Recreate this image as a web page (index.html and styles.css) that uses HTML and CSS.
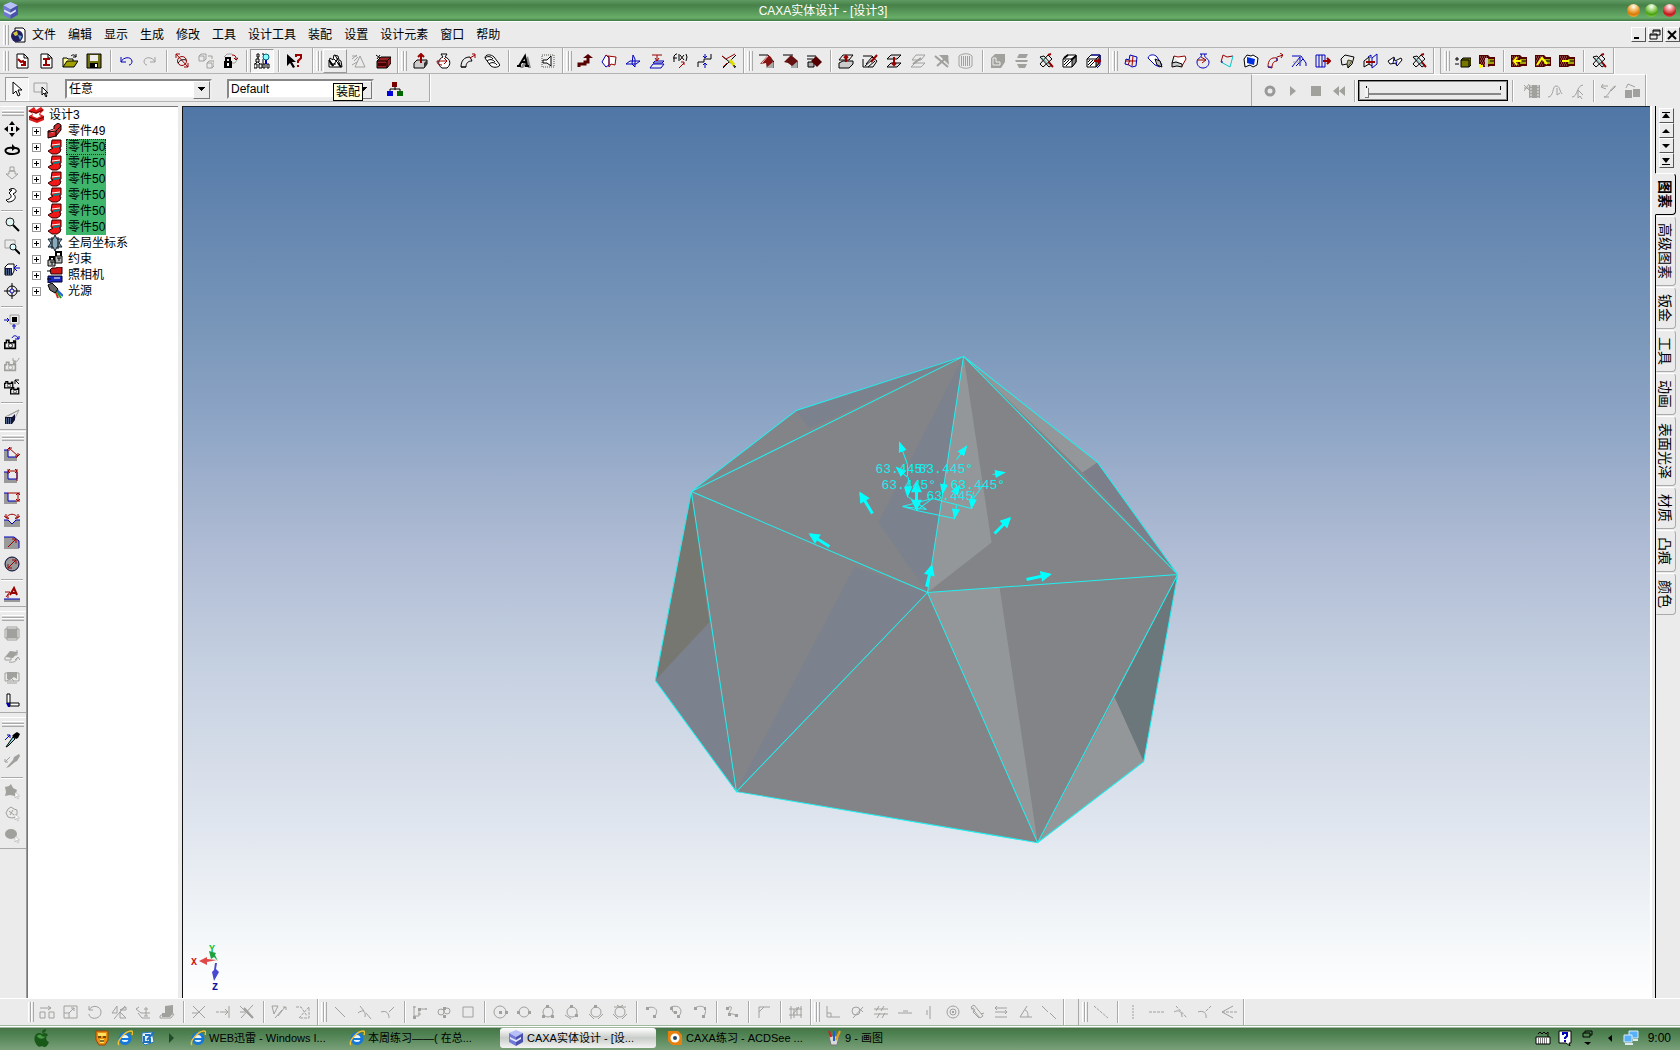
FILE: index.html
```html
<!DOCTYPE html>
<html lang="zh-CN">
<head>
<meta charset="utf-8">
<title>CAXA实体设计 - [设计3]</title>
<link rel="stylesheet" href="styles.css">
</head>
<body>
<svg class="defs" aria-hidden="true">
  <symbol id="cube" viewBox="0 0 16 16"><path fill="#b8c0f8" d="M8 0l7 3-7 4-7-4z"/><path fill="#7078d8" d="M1 3l7 4v9l-7-4z"/><path fill="#4a50b0" d="M15 3L8 7v9l7-4z"/><path fill="#e4e8ff" d="M2 7l6 3 5-3v2l-5 3-6-3z"/></symbol>
  <symbol id="ie" viewBox="0 0 16 16"><circle cx="8" cy="8.500" r="5" fill="#e8f6ff" stroke="#1878d8" stroke-width="3"/><path fill="#1878d8" d="M4 8h10v2H4z"/><path fill="none" stroke="#f4c030" stroke-width="1.500" d="M2 15C-1 12 8 1 14 1c2 0 2 2 1 4"/></symbol>
  <symbol id="part" viewBox="0 0 16 16"><path fill="#f01818" stroke="#300" d="M5 1l9 0 0 7-2 1 2 1-1 3-3 2-5 0-4-3 5-3-2-1z"/><path stroke="#fff" d="M5 6l8-1"/><path stroke="#088" stroke-width="2" d="M7 8l6-1"/></symbol>
  <symbol id="camera" viewBox="0 0 16 16"><path fill="none" stroke="currentColor" stroke-width="2" d="M1 7h2V4h3v3h6V5h2v9H1z"/><circle cx="8" cy="10.500" r="2.500" fill="none" stroke="currentColor"/></symbol>
  <symbol id="solid" viewBox="0 0 16 16"><path fill="#fff" stroke="currentColor" d="M1 6l4-4h9v7l-4 5H1z"/><path fill="#888" stroke="currentColor" d="M10 6l4-4v7l-4 5z"/><path stroke="currentColor" d="M1 6h9M2 12l5-5M4 13l6-6M2 9l2-2"/></symbol>
  <symbol id="tools" viewBox="0 0 16 16"><path fill="none" stroke="#000" d="M2 4l4-1 8 9-3 2zM10 2l4 4-9 8-3-3z"/><path stroke="#900" stroke-width="2" d="M10 9l5 5M10 2l3-1"/><path stroke="#48b0b0" d="M4 5l8 7"/></symbol>
  <symbol id="box3" viewBox="0 0 16 16"><path fill="#500" d="M0 2h9l2 2h5v9h-5l-2 1H0z"/><path stroke="#b88" stroke-dasharray="1 1" d="M1 4h7M2 6h6M1 8h7M2 10h6M1 12h7"/><path fill="#a0a010" d="M9 6h6v5H9z"/><path stroke="#000" d="M11 8h4"/></symbol>
  <symbol id="pick" viewBox="0 0 16 16"><path fill="#fff" stroke="currentColor" d="M4 1v12l3-3 2 5 2-1-2-5h4z"/></symbol>
  <marker id="tip" viewBox="0 0 8 8" refX="7" refY="4" markerWidth="11" markerHeight="11" markerUnits="userSpaceOnUse" orient="auto"><path fill="#0ff" d="M0 1l8 3-8 3z"/></marker>
  <marker id="bigtip" viewBox="0 0 10 10" refX="8" refY="5" markerWidth="12" markerHeight="11" markerUnits="userSpaceOnUse" orient="auto"><path fill="#0ff" d="M0 0l10 5-10 5z"/></marker>
</svg>

<div class="app">
<header class="titlebar">
  <svg class="logo"><use href="#cube"/></svg>
  <h1>CAXA实体设计 - [设计3]</h1>
  <div class="lights"><button class="light amber" aria-label="最小化"></button><button class="light green" aria-label="还原"></button><button class="light red" aria-label="关闭"></button></div>
</header>

<nav class="menubar">
  <span class="grip"></span>
  <svg class="ico" viewBox="0 0 16 16"><path class="k" fill="#fff" d="M5 1h8l2 2v12H5z"/><circle cx="7" cy="9" r="6" fill="#202060"/><path fill="#d8c840" d="M3 6l4-2 1 4-3 1z"/><path fill="#68a8d8" d="M8 8l4 1-2 4z"/></svg>
  <button>文件</button><button>编辑</button><button>显示</button><button>生成</button><button>修改</button><button>工具</button><button>设计工具</button><button>装配</button><button>设置</button><button>设计元素</button><button>窗口</button><button>帮助</button>
  <div class="docwin"><button aria-label="最小化文档"><svg viewBox="0 0 12 12"><path class="kf" d="M2 8h5v2H2z"/></svg></button><button aria-label="还原文档"><svg viewBox="0 0 12 12"><path class="k" d="M4 4V1h7v5H8M4 2h7M1 5h7v5H1zM1 6h7"/></svg></button><button aria-label="关闭文档"><svg viewBox="0 0 12 12"><path class="k w2" d="M2 2l8 8M10 2l-8 8"/></svg></button></div>
</nav>

<div class="toolbars">
<div class="bar">
  <div class="group first">
    <span class="grip"></span>
    <button aria-label="新建设计"><svg viewBox="0 0 16 16"><path class="k" fill="#fff" d="M3 1h7l4 4v10H3z"/><path class="k" d="M10 1v4h4"/><path class="r w2" d="M4 6l3 3 2-1 2 4M11 8v4H7"/></svg></button>
    <button aria-label="新建图纸"><svg viewBox="0 0 16 16"><path class="k" fill="#fff" d="M3 1h7l4 4v10H3z"/><path class="k" d="M10 1v4h4"/><path class="r w2" d="M5 6h7M5 12h7M8 6v6"/></svg></button>
    <button aria-label="打开"><svg viewBox="0 0 16 16"><path class="k" fill="#ff9" d="M1 14V5h4l1 1h5v3"/><path class="k" fill="#a0a000" d="M1 14l4-6h11l-4 6z"/><path class="k" d="M9 3c2-2 4-1 5 1M14 1v3h-3"/></svg></button>
    <button aria-label="保存"><svg viewBox="0 0 16 16"><path class="k" fill="#707010" d="M1 1h14v14H1z"/><path fill="#eee" d="M4 2h8v6H4z"/><path class="kf" d="M4 10h8v5H4z"/><path fill="#fff" d="M9 11h2v3H9z"/></svg></button>
    <i class="sep"></i>
    <button aria-label="撤销"><svg viewBox="0 0 16 16"><path class="b" d="M3 4v5h5M3 9c2-5 10-6 11-1 0 2-1 4-3 4"/></svg></button>
    <button aria-label="重做" disabled><svg viewBox="0 0 16 16"><path class="g" d="M13 4v5H8M13 9C11 4 3 3 2 8c0 2 1 4 3 4"/></svg></button>
    <i class="sep"></i>
    <button aria-label="三维球"><svg viewBox="0 0 16 16"><circle cx="8" cy="8" r="4.500" class="r"/><path class="r" d="M2 1l12 13M2 5V1h4M10 14h4v-4"/><path class="k" d="M4 10c2-3 5-4 8-3"/></svg></button>
    <button aria-label="链接" disabled><svg viewBox="0 0 16 16"><path class="g" d="M1 3l2-2h5v5L6 8H1zM1 3h5v5M9 10l2-2h5v5l-2 2H9zM9 10h5v5M10 3h4v3"/></svg></button>
    <button aria-label="锁定"><svg viewBox="0 0 16 16"><path class="g" d="M2 4l3-3h5M8 10h5l2-3V4"/><path class="kf" d="M2 8h8v7H2z"/><path class="k w2" d="M4 8V5h4v3"/><path fill="#fff" d="M5 10h2v3H5z"/><path class="r" d="M10 2c3 0 4 1 4 4M12 5l2 2 2-2"/></svg></button>
    <i class="sep"></i>
    <button class="on" aria-label="设计树"><svg viewBox="0 0 16 16"><path class="k" d="M3 1h2v3H3zM2 6h3v3H2zM0 11h3v4H0zM5 11h3v4H5zM4 4v2M3 9l-2 2M4 9l2 2M8 1h2v3M9 6v5M9 11h2v4H9zM13 11h2v4h-2z"/><circle cx="12" cy="4" r="3" fill="#8ff" stroke="#006080"/><path class="b w2" d="M12 7v4"/></svg></button>
    <i class="sep"></i>
    <button aria-label="帮助"><svg viewBox="0 0 16 16"><path class="kf" d="M1 1v12l3-3 3 5 2-1-3-5h4z"/><path class="r w2" d="M10 4V2h5v3l-3 3v2M12 12v2"/></svg></button>
  </div>
  <div class="group">
    <span class="grip"></span>
    <button class="hov" aria-label="装配"><svg viewBox="0 0 16 16"><path class="k" fill="#fff" d="M2 9l1-4 3 2 1-5 4 1 1 4 2 1 1 6H2zM7 6l4 4M11 5l-5 8M3 11h6M8 2l5 9"/><path class="k w2" d="M2 7l4 6M11 10l3 4"/></svg></button>
    <button aria-label="解除装配" disabled><svg viewBox="0 0 16 16"><path class="g" d="M1 3h5M1 6l5-4M3 8l4-4M4 14l5-11 5 11zM1 12l5-3"/></svg></button>
    <button aria-label="零件库"><svg viewBox="0 0 16 16"><path class="k" fill="#922" d="M2 8l4-4h10v6l-4 5H2z"/><path class="k" d="M2 8h10v7M12 8l4-4M1 2l4 3M2 6l3-4"/><path fill="#400" d="M3 10h8v3H3z"/></svg></button>
  </div>
  <div class="group">
    <span class="grip"></span>
    <button aria-label="拉伸"><svg viewBox="0 0 16 16"><path class="k" fill="#ccc" d="M2 10l3-3h10v4l-3 4H2z"/><path fill="#333" d="M12 10l3-3v4l-3 4z"/><path class="r w2" d="M9 10V2M6 4l3-3 3 3"/></svg></button>
    <button aria-label="旋转"><svg viewBox="0 0 16 16"><path class="k" fill="#fff" d="M5 1h6L9 4c6 2 6 8 2 11H6c-5-3-4-9 1-11z"/><path class="r" d="M1 8h10M8 5l3 3-3 3M1 8c0 3 2 4 5 4"/></svg></button>
    <button aria-label="扫描"><svg viewBox="0 0 16 16"><path class="k" d="M1 14C1 8 4 4 10 4l2 4c-4 0-6 2-6 6zM1 14h5"/><path class="r" d="M10 5l5-3M12 1h3v4"/></svg></button>
    <button aria-label="放样"><svg viewBox="0 0 16 16"><path class="k" fill="#fff" d="M1 5c0-4 6-4 9-1l6 8c-2 3-8 3-10 0zM1 5c2-2 6-2 8 1M3 8c2-2 6-2 8 1M5 11c2-2 6-2 8 1"/></svg></button>
    <i class="sep"></i>
    <button aria-label="文字"><svg viewBox="0 0 16 16"><path fill="#888" d="M4 15L12 3l3 12h-3l-1-4-4 4z"/><path class="k w2" d="M1 13h4M9 13h4M3 13l6-10 2 10M6 9h5"/></svg></button>
    <button aria-label="边界"><svg viewBox="0 0 16 16"><path class="g w2" stroke-dasharray="1 1" d="M2 2h12v12H2z"/><path class="k" fill="#fff" d="M3 7h4l4-4v10l-4-3H3z"/></svg></button>
  </div>
  <div class="group">
    <span class="grip"></span>
    <button aria-label="折弯"><svg viewBox="0 0 16 16"><path stroke="#500" stroke-width="3" fill="none" d="M2 14v-3h6V9h3V5"/><path fill="#500" d="M6 5h10l-5-4z"/></svg></button>
    <button aria-label="曲面片"><svg viewBox="0 0 16 16"><path class="r" fill="#fff" d="M7 3l8 1-1 8-4-1-2 3z"/><path class="b" fill="#fff" d="M1 9l4-7 3 3v7l-3 2z"/><path class="r" d="M5 2l3 2v8"/></svg></button>
    <button aria-label="基准面"><svg viewBox="0 0 16 16"><path class="b" d="M1 11l4-3h10l-4 3zM8 2l2 4v8L7 11z"/></svg></button>
    <button aria-label="平行面"><svg viewBox="0 0 16 16"><path class="b" d="M1 15l3-4h11l-3 4zM4 10l2-2h9l-2 2z"/><path class="r" d="M3 2h10M8 2v6M6 5l2 3 2-3"/></svg></button>
    <button aria-label="公式曲线"><svg viewBox="0 0 16 16"><path class="k" d="M1 9V3l2-2h1M0 5h4M6 1v7M7 2l4 5M11 2L7 7M13 1l1 3-1 4"/><path class="r" d="M6 15l5-5M8 9h3v3"/></svg></button>
    <button aria-label="投影曲线"><svg viewBox="0 0 16 16"><path class="k" d="M1 14V9h6V6h7V1"/><path class="b" d="M8 1v4M8 10v5M6 3l2 2 2-2M6 12l2-2 2 2"/></svg></button>
    <button aria-label="删除曲线"><svg viewBox="0 0 16 16"><path class="k" d="M1 3l14 11M15 2L2 15M9 7l5 8"/><path class="r" d="M1 3l4 3 9-5"/><path stroke="#dd0" stroke-width="3" d="M9 7l4 5"/><path class="r" d="M2 14l4-4"/></svg></button>
  </div>
  <div class="group">
    <span class="grip"></span>
    <button aria-label="圆角过渡"><svg viewBox="0 0 16 16"><path class="k" d="M1 2h9l6 7v6"/><path fill="#aaa" d="M8 9h7v6H8z"/><path fill="#811" d="M2 11l8-9 3 2 2 5-6 5-1-4z"/><path stroke="#ecc" d="M4 10l6-7"/></svg></button>
    <button aria-label="倒角"><svg viewBox="0 0 16 16"><path class="k" d="M1 2h10M15 8v7"/><path fill="#aaa" d="M9 9h6v6H9z"/><path fill="#611" d="M2 9l7-7 7 6-6 5-4-3z"/></svg></button>
    <button aria-label="面拔模"><svg viewBox="0 0 16 16"><path class="k" d="M1 3h9M1 6h6"/><path class="k" fill="#aaa" d="M2 9h6v5H2z"/><path fill="#500" d="M5 8l5-5 6 6-5 5z"/></svg></button>
    <i class="sep"></i>
    <button aria-label="抽壳"><svg viewBox="0 0 16 16"><path class="k" fill="#ccc" d="M1 10l4-2h10v3l-4 4H1z"/><path class="k" d="M1 7l4-5h10l-4 5z"/><path class="r w2" d="M8 9V3M6 5l2-2 2 2"/></svg></button>
    <button aria-label="拔模"><svg viewBox="0 0 16 16"><path class="k" d="M1 3h9l2 2M1 6v8h10l4-6-5-4-6 7M3 13l8-7M6 14l7-6"/><path class="r w2" d="M9 9l6-7"/></svg></button>
    <button aria-label="表面移动"><svg viewBox="0 0 16 16"><path class="k" fill="#ddd" d="M1 14l4-4h10l-4 4zM1 6l4-4h10l-4 4z"/><path class="r w2" d="M8 4v8M6 10l2 2 2-2"/></svg></button>
    <button aria-label="表面匹配" disabled><svg viewBox="0 0 16 16"><path class="g" d="M1 14l4-4h10l-4 4zM2 7l4-5h9l-4 5z"/><path class="g w2" d="M3 11l8-6"/></svg></button>
    <button aria-label="表面删除" disabled><svg viewBox="0 0 16 16"><path class="g w2" d="M1 3l13 11M3 13L14 3"/><path class="gf" d="M5 2h9l1 10-4-4z"/></svg></button>
    <button aria-label="表面偏移" disabled><svg viewBox="0 0 16 16"><path class="g" d="M1 3c4-3 10-3 13 0v10c-3 3-9 3-13 0z"/><path class="g w2" stroke-dasharray="1 1" d="M3 4h10M3 6h10M3 8h10M3 10h10M3 12h10"/></svg></button>
    <i class="sep"></i>
    <button aria-label="布尔" disabled><svg viewBox="0 0 16 16"><path class="gf" d="M1 5l4-4h10v8l-4 6H1z"/><path fill="none" stroke="#eee" d="M3 5h3v4h4v3H3z"/></svg></button>
    <button aria-label="截面" disabled><svg viewBox="0 0 16 16"><path class="gf" d="M5 1h9l-2 4H3zM1 7h13l-1 2H2zM3 11h10l-2 4H5z"/></svg></button>
    <button aria-label="分割"><svg viewBox="0 0 16 16"><use href="#tools"/></svg></button>
    <button aria-label="实体"><svg viewBox="0 0 16 16"><use href="#solid"/><path class="k w2" d="M2 5l4-3M9 7l5-4"/></svg></button>
    <button aria-label="实体展开"><svg viewBox="0 0 16 16"><use href="#solid"/><path class="b" d="M5 2h9v10l-3 3"/><path class="r w2" d="M8 8h6M12 6l2 2-2 2"/></svg></button>
  </div>
  <div class="group">
    <span class="grip"></span>
    <button aria-label="网格面"><svg viewBox="0 0 16 16"><path class="b" d="M2 11l1-5 3 1 1-5 7 2-1 9-4 1-3-2z"/><path class="r" d="M2 8h11M7 7l-2 5M10 3l-1 10"/></svg></button>
    <button aria-label="放样面"><svg viewBox="0 0 16 16"><path class="b" fill="#fff" d="M1 5c1-4 7-4 9-1l5 8-2 2-5-2z"/><path class="k" fill="#bbb" d="M8 6l5 2 2 6-5-2z"/></svg></button>
    <button aria-label="直纹面"><svg viewBox="0 0 16 16"><path class="r" fill="#fff" d="M3 3l4 1 7-1 1 3-4 7"/><path class="k" fill="#ccc" d="M1 10l4-1 6 2v3l-5-1-5 1zM3 3l-2 7"/></svg></button>
    <button aria-label="旋转面"><svg viewBox="0 0 16 16"><path class="b" d="M5 1h7M6 1c2 4-4 3-4 8 0 4 3 6 6 6s6-2 6-6c0-4-6-4-4-8"/><path class="r" d="M2 7h9M6 4l5 3-4 3"/></svg></button>
    <button aria-label="导动面"><svg viewBox="0 0 16 16"><path class="r" d="M2 9l2-7 4 2 6-1"/><path stroke="#0cc" fill="none" d="M2 9l9 5 3-11"/><path class="b" d="M2 9h2"/></svg></button>
    <button aria-label="填充面"><svg viewBox="0 0 16 16"><path class="k" fill="#fff" d="M1 6l3-4 4 1 2-1 5 3-1 7-4 2-3-2-5 2z"/><path fill="#0030e0" d="M4 4l8 2-1 6-7-2z"/></svg></button>
    <button aria-label="扫掠面"><svg viewBox="0 0 16 16"><path class="r" d="M1 14C1 7 4 4 10 5v3c-3 0-5 2-5 7zM10 4l6-2M13 0l3 2-2 3"/><path class="b" d="M1 14h4M10 5v3"/></svg></button>
    <button aria-label="偏移面"><svg viewBox="0 0 16 16"><path class="b" d="M1 3h9l5 7v3M1 14l8-10M5 13l7-7M9 4v9"/><path class="g" d="M2 9h9"/></svg></button>
    <button aria-label="延伸面"><svg viewBox="0 0 16 16"><path class="b" d="M1 2h9v12H1zM4 2v12M7 2v12"/><path class="r w2" d="M8 8h7M12 5l3 3-3 3"/></svg></button>
    <button aria-label="裁剪面"><svg viewBox="0 0 16 16"><path class="k" d="M2 6l4-4 9 2-2 7-4 4-1-4-5 1z"/><path fill="#aaa" stroke="#440" d="M8 11l1-4 4 1-4 6z"/></svg></button>
    <button aria-label="合并面"><svg viewBox="0 0 16 16"><path class="b" d="M9 5l5-4v10l-5 4zM5 4l3-2v3"/><path class="k" d="M1 14V8l5-4v7zM6 11l3 2"/><path class="r w2" d="M3 9h9"/></svg></button>
    <button aria-label="还原面"><svg viewBox="0 0 16 16"><path class="k" fill="#fff" d="M1 8l6-4 1 4 6-3 1 2-5 6-1-3-6 1z"/><path class="b" d="M7 5l-1 5M10 8l-1 4"/></svg></button>
    <button aria-label="曲面工具"><svg viewBox="0 0 16 16"><use href="#tools"/></svg></button>
  </div>
  <div class="group last">
    <span class="grip"></span>
    <button aria-label="增减料"><svg viewBox="0 0 16 16"><path class="k" d="M0 6h4M2 4v4M0 11h4"/><path class="k" fill="#770" d="M6 7l2-2h8v7l-2 2H6z"/><path class="k" d="M6 7h8v7"/></svg></button>
    <button aria-label="添加零件"><svg viewBox="0 0 16 16"><use href="#box3"/><path fill="#ccc" d="M6 5h3v9H6z"/><path stroke="#ff0" stroke-width="2" d="M1 11v4M0 13h4"/></svg></button>
    <i class="sep"></i>
    <button aria-label="左移"><svg viewBox="0 0 16 16"><use href="#box3"/><path stroke="#ff0" stroke-width="2" fill="none" d="M3 8h7M6 4L3 8l3 4"/></svg></button>
    <button aria-label="转折"><svg viewBox="0 0 16 16"><use href="#box3"/><path stroke="#ff0" stroke-width="2" fill="none" d="M2 12l5-7 5 6"/></svg></button>
    <button aria-label="延长"><svg viewBox="0 0 16 16"><use href="#box3"/><path stroke="#ff0" stroke-width="2" d="M3 8h7"/></svg></button>
    <i class="sep"></i>
    <button aria-label="工具选项"><svg viewBox="0 0 16 16"><use href="#tools"/></svg></button>
  </div>
</div>

<div class="bar second">
  <div class="group style">
    <button class="on" aria-label="选择"><svg viewBox="0 0 16 16" class="ink"><use href="#pick"/></svg></button>
    <button aria-label="框选"><svg viewBox="0 0 16 16"><path class="g" d="M1 2h13v9H1z"/><path class="k" fill="#fff" d="M9 6v8l2-2 2 4 1-1-2-3h3z"/></svg></button>
    <label class="combo"><select aria-label="选择过滤"><option>任意</option></select></label>
    <label class="combo"><select aria-label="样式"><option>Default</option></select></label>
    <span class="tooltip" role="tooltip">装配</span>
    <button class="tree-btn" aria-label="结构"><svg viewBox="0 0 16 16"><path class="k" d="M8 5v4M3 11V8h10v3"/><path fill="#700" d="M5 1h5v5H5z"/><path fill="#00d" d="M0 10h6v5H0z"/><path fill="#060" d="M10 10h6v5h-6z"/></svg></button>
  </div>
  <div class="group anim">
    <button aria-label="录制" disabled><svg viewBox="0 0 16 16"><circle cx="8" cy="8" r="4" fill="none" stroke="#999" stroke-width="3"/></svg></button>
    <button aria-label="播放" disabled><svg viewBox="0 0 16 16"><path class="gf" d="M5 3l6 5-6 5z"/></svg></button>
    <button aria-label="停止" disabled><svg viewBox="0 0 16 16"><path class="gf" d="M3 3h10v10H3z"/></svg></button>
    <button aria-label="倒回" disabled><svg viewBox="0 0 16 16"><path class="gf" d="M8 3v10L2 8zM14 3v10L8 8z"/></svg></button>
    <i class="sep"></i>
    <label class="slider"><input type="range" aria-label="时间" min="0" max="100" value="0"></label>
    <i class="sep"></i>
    <button aria-label="影片" disabled><svg viewBox="0 0 16 16"><path class="gf" d="M5 2h11v13H5z"/><path class="g" d="M0 2l5 5M5 1L0 8M0 5h5"/><path stroke="#eee" stroke-dasharray="2 1" d="M7 2v13M14 2v13"/></svg></button>
    <button aria-label="路径" disabled><svg viewBox="0 0 16 16"><path class="g" d="M1 14c6 0 4-11 8-11s3 4 6 8M10 5v7l3-2"/></svg></button>
    <button aria-label="路径点" disabled><svg viewBox="0 0 16 16"><path class="g" d="M2 14c6 0 4-11 11-12M8 7v8l2-2 2 3M8 7l5 5"/></svg></button>
    <i class="sep"></i>
    <button aria-label="关键帧" disabled><svg viewBox="0 0 16 16"><path class="g" d="M1 3h6M2 1L0 4l5 2M3 14c5 0 6-10 12-11M10 8l4-4M3 14h5"/></svg></button>
    <button aria-label="序列" disabled><svg viewBox="0 0 16 16"><path class="gf" d="M1 7h7v8H1zM9 6h7v8H9z"/><path class="g" d="M2 5l2-4 7 3"/></svg></button>
  </div>
</div>
</div>

<main class="work">
  <aside class="side">
    <div class="vgroup">
      <span class="hgrip"></span>
      <button aria-label="平移"><svg viewBox="0 0 16 16"><path class="kf" d="M8 0l3 4H5zM8 16l3-4H5zM0 8l4-3v6zM16 8l-4-3v6zM7 6h2v4H7z"/></svg></button>
      <button aria-label="旋转视图"><svg viewBox="0 0 16 16"><path class="k w2" d="M9 5C1 4 0 8 3 10c4 2 12 1 12-2 0-2-2-3-4-3"/><path class="kf" d="M8 1v7l4-3z"/></svg></button>
      <button aria-label="前后移动" disabled><svg viewBox="0 0 16 16"><path class="g" d="M6 2h4v4H6zM5 6v3H2l6 5 6-5h-3V6z"/></svg></button>
      <button aria-label="任意视角"><svg viewBox="0 0 16 16"><path class="k" fill="#fff" d="M5 3c3-3 8-1 7 2l-3 2c5 3 1 8-5 8l-2-2c5-1 7-4 3-7l3-3z"/></svg></button>
      <i class="hsep"></i>
      <button aria-label="缩放"><svg viewBox="0 0 16 16"><circle cx="6" cy="5" r="4" fill="#e0f4f4" stroke="#222"/><path class="k w2" d="M9 8l6 6"/></svg></button>
      <button aria-label="窗口缩放"><svg viewBox="0 0 16 16"><path class="g" d="M1 1h10v8H1z"/><circle cx="9" cy="8" r="3" fill="#dff" stroke="#222"/><path class="k w2" d="M11 10l5 5"/></svg></button>
      <button aria-label="正视"><svg viewBox="0 0 16 16"><path class="k" fill="#fff" d="M1 6l3-3h6v7l-2 4H1z"/><path fill="#114" d="M1 7h7v7H1z"/><path stroke="#8ac" stroke-dasharray="1 1" d="M2 9h5M2 11h5M2 13h5"/><path class="b" d="M11 7h5M13 4l-3 3 3 3"/></svg></button>
      <button aria-label="目标视图"><svg viewBox="0 0 16 16"><circle cx="8" cy="8" r="5" class="k"/><circle cx="8" cy="8" r="2" class="b"/><path class="k" d="M8 0v6M8 10v6M0 8h6M10 8h6"/></svg></button>
      <i class="hsep"></i>
      <button aria-label="视向"><svg viewBox="0 0 16 16"><path class="g" d="M6 2h9v9H6z"/><path class="kf" d="M8 4h5v5H8z"/><path class="b" d="M0 7h5M3 5l2 2-2 2M10 16v-5M8 13h4"/></svg></button>
      <button aria-label="存储视向"><svg viewBox="0 0 16 16" class="ink"><use href="#camera" y="2" width="13" height="13"/><path class="b" d="M8 3c2-4 6-2 6 1M11 4h4V1"/></svg></button>
      <button aria-label="恢复视向" disabled><svg viewBox="0 0 16 16" class="dim"><use href="#camera" y="2" width="13" height="13"/><path class="g" d="M15 1c-1 4-4 4-6 3M9 1v3h3"/></svg></button>
      <button aria-label="交换视向"><svg viewBox="0 0 16 16" class="ink"><use href="#camera" width="10" height="10"/><use href="#camera" x="6" y="6" width="10" height="10"/><path class="k" d="M11 1h4M11 1l4 4M11 1v4"/></svg></button>
      <i class="hsep"></i>
      <button aria-label="透视"><svg viewBox="0 0 16 16"><path class="g" d="M1 8L15 1M10 11l5-10M4 7l11-6"/><path fill="#113" d="M1 8h7l3-3v6l-3 4H1z"/><path stroke="#9bd" stroke-dasharray="1 1" d="M2 10h5M2 12h5M2 14h5"/></svg></button>
    </div>
    <div class="vgroup">
      <span class="hgrip"></span>
      <button aria-label="线性标注"><svg viewBox="0 0 16 16"><path fill="#999" d="M0 4h4v7h9v4H0z"/><path class="b" d="M0 4h4v7h9"/><path class="r" d="M5 2l9 8M5 5V2h3M11 10h3V7M3 4l3-3M12 12l4-4"/></svg></button>
      <button aria-label="水平标注"><svg viewBox="0 0 16 16"><path fill="#999" d="M0 4h4v7h9v4H0z"/><path class="b" d="M0 4h4v7h9V4"/><path class="r" d="M4 1v5M13 1v12M4 3h9M6 1L4 3l2 2M11 1l2 2-2 2"/></svg></button>
      <button aria-label="垂直标注"><svg viewBox="0 0 16 16"><path fill="#999" d="M0 3h4v8h9v3H0z"/><path class="b" d="M0 3h4v8h8"/><path class="r" d="M4 3h12M12 11h4M14 3v8M12 5l2-2 2 2M12 9l2 2 2-2"/></svg></button>
      <button aria-label="角度标注"><svg viewBox="0 0 16 16"><path fill="#999" d="M0 8h4l4 4 4-4h4v7H0z"/><path class="b" d="M0 8h4l4 4 4-4h4"/><path class="r" d="M2 6c3-5 9-5 12 0M0 4l5 3M16 4l-5 3M2 2v4h3M14 2v4h-3"/></svg></button>
      <button aria-label="半径标注"><svg viewBox="0 0 16 16"><path fill="#999" d="M0 3h10l5 4v8H0z"/><path class="b" d="M0 3h10l5 4v7"/><path class="r" d="M4 13l8-8M8 5h4v4"/></svg></button>
      <button aria-label="直径标注"><svg viewBox="0 0 16 16"><circle cx="8" cy="8" r="7" fill="#999" stroke="#003"/><path class="r" d="M4 12l8-8M8 4h4v4M4 8v4h4"/></svg></button>
      <i class="hsep"></i>
      <button aria-label="文字注释"><svg viewBox="0 0 16 16"><path fill="#999" d="M0 13h16v3H0z"/><path class="b" d="M0 13h16"/><path class="r" d="M1 6h5L2 11M4 8v4"/><path class="r w2" d="M6 9l4-7 3 7M8 7h4"/></svg></button>
    </div>
    <div class="vgroup">
      <span class="hgrip"></span>
      <button aria-label="钣金展开" disabled><svg viewBox="0 0 16 16"><path class="gf" d="M3 3h10v9H3z"/><path class="g" d="M1 3h14v9H1zM3 1h10v13H3z"/></svg></button>
      <button aria-label="钣金还原" disabled><svg viewBox="0 0 16 16"><path class="gf" d="M1 9l5-6 8 1-5 6z"/><path class="g" d="M1 9v3h6V7h6V2M5 14c5 1 8-1 8-4M11 12l3-3 2 3"/></svg></button>
      <button aria-label="闭合角" disabled><svg viewBox="0 0 16 16"><path class="gf" d="M3 2h10v7l-3-2-4 3-3-1z"/><path class="g" d="M1 3h14v8H1zM3 11l4-3 3 3M3 13h10"/></svg></button>
      <button aria-label="折弯板"><svg viewBox="0 0 16 16"><path class="k" fill="#fff" d="M3 2h3v9H3zM6 11h9v3H6z"/><path fill="#00a" d="M2 11h4v4H4z"/></svg></button>
    </div>
    <div class="vgroup">
      <span class="hgrip"></span>
      <button aria-label="提取效果"><svg viewBox="0 0 16 16"><path class="kf" d="M10 2l3-2 3 2-2 4-2 1-4-3z"/><path fill="#8dd" stroke="#000" d="M9 5l2 2-7 7-2 1z"/><path class="b" d="M1 8l5-5M3 3h3v3"/></svg></button>
      <button aria-label="应用效果" disabled><svg viewBox="0 0 16 16"><path class="gf" d="M10 3l5-3 1 2-3 5-2 1-6 5-3 1 7-8z"/><path class="g" d="M1 8l5-5M1 5v3h3"/></svg></button>
      <i class="hsep"></i>
      <button aria-label="智能渲染" disabled><svg viewBox="0 0 16 16" class="dim"><path class="gf" d="M1 3l4-1 2-2 2 4 4 2-2 6-5-1-5 1 1-4z"/><use href="#pick" x="9" y="7" width="8" height="9"/></svg></button>
      <button aria-label="凸痕" disabled><svg viewBox="0 0 16 16" class="dim"><path class="g" d="M4 3l3-2 3 2 3 1v4l-1 3-4 1-4-1-2-4zM5 5l5 4M9 4L6 9"/><use href="#pick" x="9" y="7" width="8" height="9"/></svg></button>
      <button aria-label="贴图" disabled><svg viewBox="0 0 16 16" class="dim"><ellipse class="gf" cx="7" cy="6" rx="6" ry="5"/><use href="#pick" x="9" y="7" width="8" height="9"/></svg></button>
    </div>
  </aside>

  <section class="tree" aria-label="设计树">
    <ul>
      <li class="root"><svg class="ico" viewBox="0 0 16 16"><path fill="#e01818" d="M0 4l6-4 2 3 5-3 3 3-4 4 4 2v4l-7 3-8-3v-4l4-2z"/><path fill="#fff" d="M4 5l4 2 4-2-1 3 2 1-4 2-5-2 1-1z"/><path stroke="#600" fill="none" d="M1 4l7 2 7-3M1 10l8 3 7-3"/></svg><span>设计3</span></li>
      <li><i class="plus"></i><svg class="ico" viewBox="0 0 16 16"><path class="k" fill="#d02828" d="M1 8l6-2V3l4-3 3 2v5l-5 6-8 2z"/><path fill="#f88" d="M2 8l5-2 3 2-5 2z"/><path class="k" d="M1 9l8-1 5-5M9 8v6"/></svg><span>零件49</span></li>
      <li><i class="plus"></i><svg class="ico"><use href="#part"/></svg><span class="sel focus">零件50</span></li>
      <li><i class="plus"></i><svg class="ico"><use href="#part"/></svg><span class="sel">零件50</span></li>
      <li><i class="plus"></i><svg class="ico"><use href="#part"/></svg><span class="sel">零件50</span></li>
      <li><i class="plus"></i><svg class="ico"><use href="#part"/></svg><span class="sel">零件50</span></li>
      <li><i class="plus"></i><svg class="ico"><use href="#part"/></svg><span class="sel">零件50</span></li>
      <li><i class="plus"></i><svg class="ico"><use href="#part"/></svg><span class="sel">零件50</span></li>
      <li><i class="plus"></i><svg class="ico" viewBox="0 0 16 16"><path fill="#8ab" stroke="#123" d="M8 0l2 4h5l-3 4 3 4h-5l-2 4-2-4H1l3-4-3-4h5z"/><path class="k" d="M5 2v12M11 2v12"/></svg><span>全局坐标系</span></li>
      <li><i class="plus"></i><svg class="ico" viewBox="0 0 16 16"><path class="k w2" d="M3 9V6h4v3M9 5V1h5v4"/><path class="k" fill="#bbb" d="M8 5h7v7H8zM1 9h7v6H1z"/><path class="k" d="M3 11h4M5 11v3M10 7h4M12 7v3"/></svg><span>约束</span></li>
      <li><i class="plus"></i><svg class="ico" viewBox="0 0 16 16"><path fill="#d01818" stroke="#200" d="M3 3l2-2h4l2-1h4v7H4z"/><path fill="#1828c0" stroke="#002" d="M5 9h10v6H5l-4 1V9z"/><path stroke="#fff" d="M7 11h6"/><path class="k" d="M0 4h4M0 12h4"/></svg><span>照相机</span></li>
      <li><i class="plus"></i><svg class="ico" viewBox="0 0 16 16"><path stroke="#e02020" stroke-width="2" d="M8 7l3 8"/><path stroke="#20a020" stroke-width="2" d="M9 7l5 8"/><path stroke="#2060e0" stroke-width="2" d="M10 7l6 6"/><path class="k" fill="#666" d="M1 2l4-2 6 6-3 4-5-3z"/></svg><span>光源</span></li>
    </ul>
  </section>

  <section class="viewport" aria-label="三维设计环境">
    <svg class="scene" viewBox="184 108 1466 890" role="img" aria-label="多面体模型">
      <path fill="#838488" d="M964 357L797 411 692 492 656 681 737 792l301 51 106-81 34-187-80-112z"/>
      <g class="facets">
        <path fill="#7b818d" d="M964 357L797 411l13 18z"/>
        <path fill="#949799" d="M964 357l134 106-15 10z"/>
        <path fill="#7c7f8a" d="M1098 463l-15 10 95 102z"/>
        <path fill="#7b818d" d="M964 357l-85 166 49 70z"/>
        <path fill="#949799" d="M964 357l28 186-64 50z"/>
        <path fill="#7b818d" d="M928 593l-73-26-118 225z"/>
        <path fill="#949799" d="M928 593l72-5 38 255z"/>
        <path fill="#777772" d="M692 492l18 131-54 58z"/>
        <path fill="#7b818d" d="M710 623l-54 58 81 111z"/>
        <path fill="#6c777c" d="M1178 575l-63 123 29 64z"/>
        <path fill="#949799" d="M1115 698l29 64-106 81z"/>
      </g>
      <path class="edge" d="M964 357L797 411 692 492 656 681 737 792l301 51 106-81 34-187-80-112zM964 357L692 492l45 300 191-199 110 250 140-268zM692 492l236 101 250-18M928 593l36-236"/>
      <g class="thick">
        <path d="M873 514l-12-20"/><path d="M995 534l15-15"/><path d="M1027 580l23-5"/><path d="M927 587l5-20"/><path d="M830 547l-19-12"/>
        <path d="M917 495v-11"/><path d="M917 490v19"/>
      </g>
      <g class="thin">
        <path d="M908 465l-8-22"/><path d="M957 460l10-13"/><path d="M993 475l12-2"/><path d="M908 478l-11-10"/><path d="M909 478l-1 19"/><path d="M945 482l-2 12"/><path d="M957 506l-2 13"/><path d="M974 492l-2 17"/><path d="M955 494l5-8"/>
      </g>
      <path class="edge" d="M917 511l38 8M927 510l-24-3 30-8 39 10M908 497l19 13M903 507l14 4 16-12M908 465v12M974 499l10-14"/>
      <g class="dims"><text x="876" y="474">63.445°</text><text x="919" y="474">63.445°</text><text x="882" y="490">63.445°</text><text x="951" y="490">63.445°</text><text x="927" y="501">63.445</text></g>
    </svg>
    <svg class="triad" viewBox="0 0 36 48" role="img" aria-label="坐标轴"><path fill="#e04848" d="M8 19l8-4v2l10 1-10 2v3z"/><path fill="#20a040" d="M18 9l7 2-1 2 3 6-4-4-3 2z"/><path fill="#4848d0" d="M26 21l-1 6 3 3-5 9-2-9 2-2 1-7z"/><text x="0" y="23" fill="#d01010">X</text><text x="18" y="10" fill="#10c030">Y</text><text x="21" y="48" fill="#1010a0">Z</text></svg>
  </section>

  <aside class="catalog">
    <div class="navs"><button aria-label="首页"><svg viewBox="0 0 12 12"><path class="kf" d="M6 3l4 5H2zM2 2h8v1H2z"/></svg></button><button aria-label="上一页"><svg viewBox="0 0 12 12"><path class="kf" d="M6 4l4 4H2z"/></svg></button><button aria-label="下一页"><svg viewBox="0 0 12 12"><path class="kf" d="M6 8l4-4H2z"/></svg></button><button aria-label="末页"><svg viewBox="0 0 12 12"><path class="kf" d="M6 8l4-5H2zM2 9h8v1H2z"/></svg></button></div>
    <div class="tabs"><button class="active">图素</button><button>高级图素</button><button>钣金</button><button>工具</button><button>动画</button><button>表面光泽</button><button>材质</button><button>凸痕</button><button>颜色</button></div>
  </aside>
</main>

<div class="bar sketch">
  <div class="group">
    <span class="grip"></span>
    <button aria-label="移动" disabled><svg viewBox="0 0 16 16"><path class="g" d="M1 8h5v6H1zM10 8h5v6h-5zM1 4h11M9 2l3 2-3 2"/></svg></button>
    <button aria-label="缩放曲线" disabled><svg viewBox="0 0 16 16"><path class="g" d="M1 2h13v12H1zM1 9h5v5M6 9l5-5M8 4h3v3"/></svg></button>
    <button aria-label="旋转曲线" disabled><svg viewBox="0 0 16 16"><path class="g" d="M2 2v4h4M2 6c3-6 12-4 12 2 0 8-12 8-12 2"/></svg></button>
    <button aria-label="镜像" disabled><svg viewBox="0 0 16 16"><path class="g" d="M1 9l5-7v7zM9 14V8l6 6zM3 15L14 2M9 6h6V3z"/></svg></button>
    <button aria-label="等距" disabled><svg viewBox="0 0 16 16"><path class="g" d="M1 5l5 4h9M4 3l-3 2M3 9l4 5h8M11 3v9M9 5h4M9 12h4"/></svg></button>
    <button aria-label="投影" disabled><svg viewBox="0 0 16 16"><path class="gf" d="M6 2l8-1v8l-3 4H3V9h3z"/><path class="g" d="M1 12l3-2h11l-3 4H1z"/></svg></button>
    <i class="sep"></i>
    <button aria-label="裁剪" disabled><svg viewBox="0 0 16 16"><path class="g" d="M2 2l12 12M14 2L2 14M1 9h6"/></svg></button>
    <button aria-label="延伸" disabled><svg viewBox="0 0 16 16"><path class="g" d="M1 8h3M5 8h8M14 2v12M10 5l3 3-3 3"/></svg></button>
    <button aria-label="打断" disabled><svg viewBox="0 0 16 16"><path class="g" d="M1 2l12 12M14 1L2 14M1 8h5"/><path class="g w2" d="M5 4l9 10"/></svg></button>
    <i class="sep"></i>
    <button aria-label="显示曲线" disabled><svg viewBox="0 0 16 16"><path class="g" d="M1 2h6L3 10 1 2M7 12l7-9M4 14l7-8M12 3h3v3"/></svg></button>
    <button aria-label="显示端点" disabled><svg viewBox="0 0 16 16"><path class="g" d="M1 3h5l6 9M14 3L4 14h10z" stroke-dasharray="3 1"/></svg></button>
  </div>
  <div class="group">
    <span class="grip"></span>
    <button aria-label="两点线" disabled><svg viewBox="0 0 16 16"><path class="g" d="M3 3l10 10"/></svg></button>
    <button aria-label="切线" disabled><svg viewBox="0 0 16 16"><path class="g" d="M4 2l4 5M2 9c5-4 8-2 7 4M10 9l5 6"/></svg></button>
    <button aria-label="法线" disabled><svg viewBox="0 0 16 16"><path class="g" d="M14 3L9 8M1 8c6-2 8 2 8 6"/></svg></button>
    <i class="sep"></i>
    <button aria-label="连续直线" disabled><svg viewBox="0 0 16 16"><path class="g" d="M2 2v12M2 12h5V5h8M1 3h3M6 10h3M13 5h2"/><path class="gf" d="M1 12h3v3H1zM6 4h3v3H6z"/></svg></button>
    <button aria-label="切弧" disabled><svg viewBox="0 0 16 16"><circle cx="5" cy="8" r="3" class="g"/><circle cx="11" cy="7" r="3" class="g"/><path class="gf" d="M7 3h3v3H7zM7 11h3v3H7z"/></svg></button>
    <button aria-label="矩形" disabled><svg viewBox="0 0 16 16"><path class="g" d="M3 3h10v10H3z"/></svg></button>
    <i class="sep"></i>
    <button aria-label="圆" disabled><svg viewBox="0 0 16 16"><circle cx="8" cy="8" r="6" class="g"/><path class="gf" d="M7 7h3v3H7zM13 7h3v3h-3z"/></svg></button>
    <button aria-label="两点圆" disabled><svg viewBox="0 0 16 16"><circle cx="8" cy="8" r="5" class="g"/><path class="gf" d="M1 7h3v3H1zM12 7h3v3h-3z"/></svg></button>
    <button aria-label="三点圆" disabled><svg viewBox="0 0 16 16"><circle cx="8" cy="8" r="5" class="g"/><path class="gf" d="M6 1h3v3H6zM2 11h3v3H2zM11 11h3v3h-3z"/></svg></button>
    <button aria-label="一切点圆" disabled><svg viewBox="0 0 16 16"><circle cx="8" cy="8" r="5" class="g"/><path class="gf" d="M6 1h3v3H6zM11 10h3v3h-3z"/><path class="g" d="M1 11l6 4"/></svg></button>
    <button aria-label="两切点圆" disabled><svg viewBox="0 0 16 16"><circle cx="8" cy="8" r="5" class="g"/><path class="gf" d="M6 1h3v3H6z"/><path class="g" d="M1 10l5 5M15 10l-5 5"/></svg></button>
    <button aria-label="三切点圆" disabled><svg viewBox="0 0 16 16"><circle cx="8" cy="8" r="5" class="g"/><path class="g" d="M1 10l5 5M15 10l-5 5M2 3h12M5 1l3 2 3-2"/></svg></button>
    <i class="sep"></i>
    <button aria-label="两点弧" disabled><svg viewBox="0 0 16 16"><path class="g" d="M3 4c8-3 13 3 7 9"/><path class="gf" d="M2 3h3v3H2zM9 11h3v3H9z"/></svg></button>
    <button aria-label="圆心弧" disabled><svg viewBox="0 0 16 16"><path class="g" d="M3 3c8-3 13 3 8 9M3 3l2 5 4 1"/><path class="gf" d="M2 3h3v3H2zM9 11h3v3H9zM6 7h3v3H6z"/></svg></button>
    <button aria-label="三点弧" disabled><svg viewBox="0 0 16 16"><path class="g" d="M3 4c6-4 14-1 9 8"/><path class="gf" d="M2 3h3v3H2zM10 11h3v3h-3zM12 3h2v3h-2z"/></svg></button>
    <i class="sep"></i>
    <button aria-label="样条" disabled><svg viewBox="0 0 16 16"><path class="g" d="M3 4c8-4 3 3 2 5s6-1 7 4"/><path class="gf" d="M2 3h3v3H2zM4 9h3v3H4zM11 10h3v3h-3z"/></svg></button>
    <i class="sep"></i>
    <button aria-label="圆角" disabled><svg viewBox="0 0 16 16"><path class="g" d="M3 14V3h11M3 8l5-5"/></svg></button>
    <i class="sep"></i>
    <button aria-label="构造" disabled><svg viewBox="0 0 16 16"><path class="g" d="M3 2v13M1 5h13M1 11h13M6 5v9M13 2v12M5 10l6-7M9 3v8"/></svg></button>
  </div>
  <div class="group">
    <span class="grip"></span>
    <button aria-label="垂直约束" disabled><svg viewBox="0 0 16 16"><path class="g" d="M2 2v11h13M2 9h4v4"/></svg></button>
    <button aria-label="相切约束" disabled><svg viewBox="0 0 16 16"><circle cx="7" cy="7" r="4" class="g"/><path class="g" d="M14 3L4 14M11 5l3 3"/></svg></button>
    <button aria-label="平行约束" disabled><svg viewBox="0 0 16 16"><path class="g" d="M1 5h14M1 10h14M6 2l-3 5M11 2L8 7M7 9l-3 5M12 9l-3 5"/></svg></button>
    <button aria-label="水平约束" disabled><svg viewBox="0 0 16 16"><path class="g" d="M1 9h14M6 7h5"/></svg></button>
    <button aria-label="竖直约束" disabled><svg viewBox="0 0 16 16"><path class="g" d="M9 2v13M6 6v5"/></svg></button>
    <button aria-label="同心约束" disabled><svg viewBox="0 0 16 16"><circle cx="8" cy="8" r="6" class="g"/><circle cx="8" cy="8" r="3" class="g"/><path class="gf" d="M7 7h2v2H7z"/></svg></button>
    <button aria-label="长度约束" disabled><svg viewBox="0 0 16 16"><path class="g" d="M2 3l3-2 9 11-3 2zM6 5L4 8l6 6M2 5l3-1M12 10l3-1"/></svg></button>
    <button aria-label="等长约束" disabled><svg viewBox="0 0 16 16"><path class="g" d="M2 4h12M2 8h12M2 13h12M4 2L2 4l2 2M12 6l2 2-2 2"/></svg></button>
    <button aria-label="角度约束" disabled><svg viewBox="0 0 16 16"><path class="g" d="M10 2L3 13h12M8 6c3 1 3 4 3 7"/></svg></button>
    <button aria-label="共线约束" disabled><svg viewBox="0 0 16 16"><path class="g" d="M1 2l6 6M9 9l6 6"/></svg></button>
  </div>
  <div class="group aux">
    <span class="grip"></span>
    <button aria-label="辅助线" disabled><svg viewBox="0 0 16 16"><path class="g" stroke-dasharray="3 1" d="M1 2l14 12"/></svg></button>
    <i class="sep"></i>
    <button aria-label="竖直辅助线" disabled><svg viewBox="0 0 16 16"><path class="g" stroke-dasharray="2 1" d="M8 1v14"/></svg></button>
    <button aria-label="水平辅助线" disabled><svg viewBox="0 0 16 16"><path class="g" stroke-dasharray="3 1" d="M0 8h16"/></svg></button>
    <button aria-label="切线辅助线" disabled><svg viewBox="0 0 16 16"><path class="g" stroke-dasharray="3 1" d="M3 2l11 12"/><path class="g" d="M1 8c5-3 8 0 8 5"/></svg></button>
    <button aria-label="法线辅助线" disabled><svg viewBox="0 0 16 16"><path class="g" stroke-dasharray="3 1" d="M14 2L8 8"/><path class="g" d="M1 8c5-2 9 1 8 6"/></svg></button>
    <button aria-label="角分辅助线" disabled><svg viewBox="0 0 16 16"><path class="g" d="M12 2L1 8l11 6"/><path class="g" stroke-dasharray="3 1" d="M1 8h15"/></svg></button>
  </div>
</div>

<footer class="taskbar">
  <button class="start" aria-label="开始"><svg viewBox="0 0 16 18"><path fill="#185818" d="M8 5c2-2 5-1 6 1-3 2-2 6 1 7-2 5-4 6-7 4-3 2-5 0-7-4-2-6 2-11 7-8zM8 4c0-3 2-4 4-4 0 3-2 4-4 4z"/><path fill="#4a9848" d="M3 7c2-2 4-1 5 0s3 1 4 0c-2 3-7 4-9 0z"/></svg></button>
  <div class="quick">
    <button aria-label="狮子"><svg viewBox="0 0 16 16"><path fill="#e89010" stroke="#a04008" d="M2 1h12v9l-3 5H5l-3-5z"/><path fill="#ffe060" d="M4 3h8v3H4zM6 9h4v4H6z"/><path class="k" d="M4 7h3M9 7h3M6 11h4"/></svg></button>
    <button aria-label="浏览器"><svg viewBox="0 0 16 16"><use href="#ie"/></svg></button>
    <button aria-label="显示桌面"><svg viewBox="0 0 16 16"><path fill="#e8f4ff" stroke="#2878b8" d="M2 3l10-1 2 10-9 3-3-3z"/><path fill="none" stroke="#2070c0" stroke-width="2" d="M5 5h5M4 6v6h6V8M7 10l7-8"/></svg></button>
    <button aria-label="更多"><svg viewBox="0 0 16 16"><path fill="#234a28" d="M6 3l5 5-5 5z"/></svg></button>
  </div>
  <button class="task"><svg><use href="#ie"/></svg><span>WEB迅雷 - Windows I...</span></button>
  <button class="task"><svg><use href="#ie"/></svg><span>本周练习——( 在总...</span></button>
  <button class="task current"><svg><use href="#cube"/></svg><span>CAXA实体设计 - [设...</span></button>
  <button class="task"><svg viewBox="0 0 16 16"><path fill="#e88010" d="M1 1h10l4 4v10H5l-4-4z"/><circle cx="8" cy="8" r="4.500" fill="#fff"/><circle cx="8" cy="8" r="2" fill="#246"/></svg><span>CAXA练习 - ACDSee ...</span></button>
  <button class="task"><svg viewBox="0 0 16 16"><path fill="#d8d8d8" stroke="#777" d="M3 6h10l-2 9H5z"/><path stroke="#d02020" stroke-width="2" d="M5 7L3 1"/><path stroke="#2060d0" stroke-width="2" d="M8 11V1"/><path stroke="#e0a020" stroke-width="2" d="M10 10l4-9"/></svg><span>9 - 画图</span></button>
  <div class="tray">
    <svg viewBox="0 0 16 16"><path class="k" fill="#fff" d="M1 7h14v7H1z"/><path class="k" stroke-dasharray="1 1" d="M3 9h10M3 11h10M3 13h10"/><path class="k" d="M3 4l2-2 2 2 2-2 2 2 2-2v5"/></svg>
    <svg viewBox="0 0 16 16"><path class="k" fill="#fff" d="M2 1h12v12h-2l1 3-4-3H2z"/><path class="b w2" d="M6 5V3h4v3L8 8v1M8 10v2"/></svg>
    <svg viewBox="0 0 16 16"><path class="k" d="M6 3V1h7v4h-2M4 3h7v4H4z"/><path class="kf" d="M5 12h7l-3 3z"/></svg>
    <svg viewBox="0 0 16 16"><path class="kf" d="M11 5v7L7 8z"/></svg>
    <svg viewBox="0 0 16 16"><path fill="#58b0f8" stroke="#d8ecff" d="M6 1h9v7H6z"/><path fill="#58b0f8" stroke="#d8ecff" d="M1 5h8v7H1z"/><path fill="#e0e8f0" d="M2 13h8v2H2zM10 9h5v2h-5z"/></svg>
    <time>9:00</time>
  </div>
</footer>
</div>
</body>
</html>
```

FILE: styles.css
```css
* { box-sizing: border-box; }
html, body { height: 100%; margin: 0; }
body { background: #ebebeb; color: #000; font: 12px/16px "Liberation Sans", "Noto Sans CJK SC", sans-serif; overflow: hidden; }
button { font: inherit; color: inherit; border: 0; padding: 0; margin: 0; background: none; }
svg { display: block; }
.defs { position: absolute; width: 0; height: 0; }
.app { display: flex; flex-direction: column; height: 100vh; }

/* icon inks */
.k:not([fill]), .r:not([fill]), .b:not([fill]), .g { fill: none; }
.k { stroke: #000; }
.r { stroke: #900; }
.b { stroke: #00b; }
.g { stroke: #a0a09c; }
.kf { fill: #000; }
.gf { fill: #a0a09c; }
.w2 { stroke-width: 2; }
.ink { color: #000; }
.dim { color: #a0a09c; }
.ico { width: 16px; height: 16px; flex: none; }

/* title bar */
.titlebar { display: flex; align-items: center; height: 21px; flex: none; padding: 0 4px 0 2px; color: #fff; background: linear-gradient(#5f9b62 0, #478149 25%, #68ae69 85%, #3f7742 100%); }
.titlebar h1 { flex: 1; margin: 0; text-align: center; font-size: 12px; line-height: 20px; font-weight: 400; }
.logo { width: 17px; height: 17px; }
.lights { display: flex; gap: 5px; }
.light { width: 13px; height: 13px; border-radius: 50%; }
.amber { background: radial-gradient(circle at 50% 20%, #fff 0, #f5c06a 30%, #d97808 65%, #ffd95a 100%); }
.green { background: radial-gradient(circle at 50% 20%, #fff 0, #a8dc80 30%, #48a010 65%, #b0f060 100%); }
.red { background: radial-gradient(circle at 50% 20%, #fff 0, #f09090 30%, #c01818 65%, #ff7070 100%); }

/* menu */
.menubar { display: flex; align-items: center; height: 27px; flex: none; border-top: 1px solid #fff; border-bottom: 1px solid #b4b4b4; }
.menubar > button { padding: 0 6px; white-space: nowrap; }
.docwin { margin-left: auto; display: flex; gap: 2px; }
.docwin button, .navs button { width: 15px; height: 15px; background: #ebebeb; border: 1px solid; border-color: #fff #555 #555 #fff; }
.docwin svg { width: 12px; height: 12px; }
.grip { flex: none; width: 10px; height: 20px; background: linear-gradient(90deg, transparent 3px, #fff 3px 4px, transparent 4px 5px, #aaa 5px 6px, #fff 6px 7px, transparent 7px 8px, #aaa 8px 9px, transparent 9px); }

/* toolbars */
.toolbars { flex: none; height: 58px; }
.bar { display: flex; height: 26px; }
.group { display: flex; align-items: center; flex: none; padding-right: 2px; border-right: 1px solid #a8a8a8; border-bottom: 1px solid #b4b4b4; box-shadow: 1px 0 #fff; }
.first { padding-right: 6px; }
.last { margin-left: 6px; border-left: 1px solid #a8a8a8; }
.group button { display: flex; align-items: center; justify-content: center; width: 24px; height: 24px; flex: none; }
.group button svg, .side button svg { width: 16px; height: 16px; }
.group .on { background: #f5f5f5; border: 1px solid; border-color: #999 #fff #fff #999; }
.group .hov { border: 1px solid; border-color: #fff #999 #999 #fff; }
.sep { flex: none; width: 8px; height: 22px; background: linear-gradient(90deg, transparent 4px, #aaa 4px 5px, #fff 5px 6px, transparent 6px); }
.second { justify-content: space-between; height: 32px; }
.style { position: relative; height: 28px; padding-top: 2px; padding-left: 5px; padding-right: 22px; }
.combo { position: relative; display: flex; width: 147px; height: 20px; margin-left: 12px; }
.combo + .combo { margin-left: 15px; }
.combo select { appearance: none; width: 100%; height: 20px; padding: 0 2px; border: 2px solid; border-color: #888 #eee #eee #888; border-radius: 0; background: #fff; color: #000; font: inherit; line-height: 16px; }
.combo::after { content: ""; position: absolute; right: 2px; top: 2px; width: 15px; height: 16px; background: linear-gradient(#000, #000) center 5px / 7px 1px no-repeat, linear-gradient(#000, #000) center 6px / 5px 1px no-repeat, linear-gradient(#000, #000) center 7px / 3px 1px no-repeat, linear-gradient(#000, #000) center 8px / 1px 1px no-repeat #ebebeb; border: 1px solid; border-color: #fff #777 #777 #fff; pointer-events: none; }
.tooltip { position: absolute; left: 333px; top: 9px; padding: 0 2px; border: 1px solid #000; background: #ffffe1; line-height: 16px; }
.tree-btn { margin-left: 9px; }
.anim { margin-right: 34px; padding-left: 6px; border-left: 1px solid #a8a8a8; height: 32px; border-bottom: 0; border-top: 1px solid #fff; }
.anim button { width: 23px; }
.slider { display: flex; width: 150px; height: 21px; padding: 0 6px; border: 1px solid #000; outline: 1px solid #888; outline-offset: -2px; }
.slider + .sep { margin-right: 4px; }
.slider input { appearance: none; width: 100%; height: 19px; margin: 0; background: linear-gradient(#000, #000) 1px 5px / 1px 4px no-repeat, linear-gradient(#000, #000) 100% 5px / 1px 4px no-repeat, linear-gradient(#888, #888) 0 12px / 100% 2px no-repeat; }
.slider input::-webkit-slider-thumb { appearance: none; width: 4px; height: 10px; margin-top: 4px; background: #f4f4f4; border-right: 1px solid #777; border-bottom: 1px solid #777; }

/* work area */
.work { flex: 1; display: flex; min-height: 0; }
.side { width: 27px; flex: none; border-right: 1px solid #999; }
.vgroup { display: flex; flex-direction: column; padding-bottom: 1px; border-bottom: 1px solid #aaa; margin-bottom: 4px; border-top: 1px solid #fff; }
.vgroup:first-child { margin-bottom: 1px; }
.vgroup button { display: flex; align-items: center; justify-content: center; width: 24px; height: 22px; }
.hgrip { height: 11px; width: 22px; margin-left: 2px; background: linear-gradient(transparent 3px, #fff 3px 4px, #aaa 5px 6px, #fff 6px 7px, #aaa 8px 9px, transparent 9px); }
.hsep { height: 8px; width: 22px; margin-left: 1px; background: linear-gradient(transparent 4px, #aaa 4px 5px, #fff 5px 6px, transparent 6px); }
.tree { width: 151px; flex: none; margin-right: 4px; background: #fff; border-top: 1px solid #777; border-left: 1px solid #777; overflow: hidden; }
.tree ul { list-style: none; margin: 0; padding: 0; }
.tree li { display: flex; align-items: center; height: 16px; padding-left: 4px; white-space: nowrap; }
.tree li span { margin-left: 3px; padding: 0 1px 0 2px; line-height: 16px; }
.tree .root { padding-left: 0; }
.plus { width: 9px; height: 9px; margin-right: 6px; border: 1px solid #999; flex: none; background: linear-gradient(#000, #000) center / 5px 1px no-repeat, linear-gradient(#000, #000) center / 1px 5px no-repeat; }
.tree .sel { background: #3fb56c; }
.tree .focus { outline: 1px dotted #222; outline-offset: -1px; }

.viewport { position: relative; flex: 1; min-width: 0; border-top: 1px solid #1c2430; border-left: 1px solid #111; background: linear-gradient(#4f76a6 0, #7b98ba 26%, #8fa6c6 36%, #acb9d2 48%, #c4cfe0 62%, #dfe5ee 80%, #f4f7f9 93%, #fff 100%); }
.scene { width: 100%; height: 100%; }
.edge { fill: none; stroke: #20f0f0; stroke-width: 1; }
.thick path { stroke: #0ff; stroke-width: 3; marker-end: url(#bigtip); }
.thin path { stroke: #0ff; stroke-width: 1; marker-end: url(#tip); }
.dims text { fill: #10f0f0; font: 13px "Liberation Mono", monospace; }
.triad { position: absolute; left: 8px; bottom: 8px; width: 36px; height: 48px; font: 700 10px "Liberation Mono", monospace; }

.catalog { width: 30px; flex: none; padding-left: 3px; border-left: 2px solid #fff; }
.navs { display: flex; flex-direction: column; height: 67px; padding: 2px 0 0 3px; border-left: 1px solid #000; }
.navs svg { width: 12px; height: 12px; }
.tabs { display: flex; flex-direction: column; align-items: flex-start; border-left: 1px solid #000; height: calc(100% - 67px); }
.tabs button { writing-mode: vertical-rl; text-orientation: sideways; width: 20px; padding: 6px 2px; margin-bottom: 1px; border: 1px solid; border-color: #fff #aaa #aaa transparent; border-radius: 0 4px 4px 0; font-size: 14px; line-height: 16px; white-space: nowrap; }
.tabs .active { font-weight: 700; border-color: #fff #000 #000 #ebebeb; margin-left: -1px; width: 21px; }

/* sketch toolbar and task bar */
.sketch { flex: none; height: 27px; padding-left: 25px; border-top: 1px solid #fff; }
.sketch .group { border-bottom: 0; }
.sketch .aux { margin-left: 14px; border-left: 1px solid #a8a8a8; }
.taskbar { display: flex; align-items: center; height: 25px; flex: none; border-top: 1px solid #9db89d; background: linear-gradient(#fff 0 1px, #477347 2px, #4c804f 30%, #7aa07a 100%); }
.taskbar svg { width: 16px; height: 16px; flex: none; }
.start { width: 84px; display: flex; justify-content: center; }
.start svg { width: 16px; height: 18px; }
.quick { display: flex; gap: 7px; padding: 0 3px 0 10px; }
.task { display: flex; align-items: center; gap: 3px; width: 156px; height: 20px; margin-right: 3px; padding-left: 8px; white-space: nowrap; overflow: hidden; text-align: left; font-size: 11px; }
.current { border-radius: 3px; background: linear-gradient(#fff, #c8ccc8 50%, #f4f4f4); }
.tray { margin-left: auto; display: flex; align-items: center; gap: 6px; padding-right: 9px; }
.tray time { margin-left: 3px; }
```
